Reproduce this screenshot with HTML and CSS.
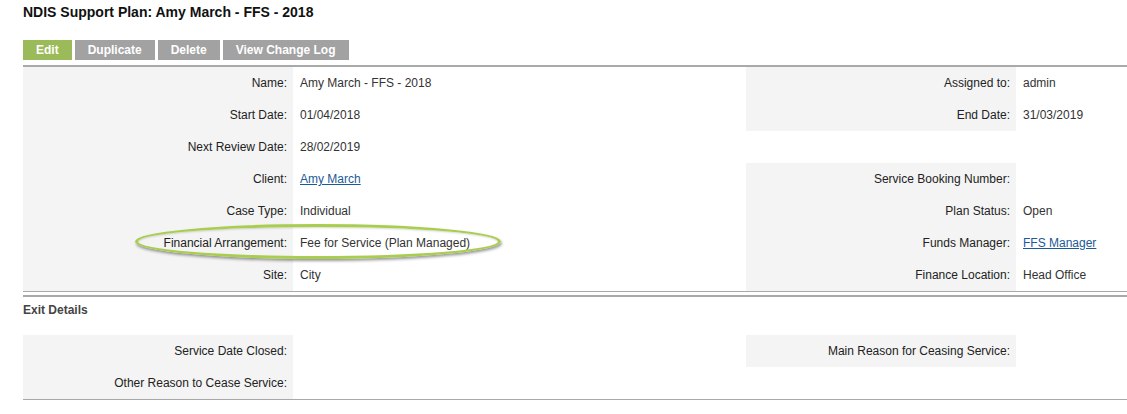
FILE: index.html
```html
<!DOCTYPE html>
<html lang="en">
<head>
    <meta charset="UTF-8">
    <title>NDIS Support Plan: Amy March - FFS - 2018</title>
    <link rel="stylesheet" href="styles.css">
</head>
<body>
    <div class="page">
        <h1>NDIS Support Plan: Amy March - FFS - 2018</h1>

        <div class="actions">
            <a href="#" class="btn btn-edit">Edit</a>
            <a href="#" class="btn">Duplicate</a>
            <a href="#" class="btn">Delete</a>
            <a href="#" class="btn">View Change Log</a>
        </div>

        <!-- Details du plan -->
        <div class="panel main-panel">
            <div class="details">
                <div class="lbl">Name:</div>
                <div class="val">Amy March - FFS - 2018</div>
                <div class="lbl">Assigned to:</div>
                <div class="val">admin</div>

                <div class="lbl">Start Date:</div>
                <div class="val">01/04/2018</div>
                <div class="lbl">End Date:</div>
                <div class="val">31/03/2019</div>

                <div class="lbl">Next Review Date:</div>
                <div class="val">28/02/2019</div>
                <div class="lbl blank"></div>
                <div class="val"></div>

                <div class="lbl">Client:</div>
                <div class="val"><a href="#">Amy March</a></div>
                <div class="lbl">Service Booking Number:</div>
                <div class="val"></div>

                <div class="lbl">Case Type:</div>
                <div class="val">Individual</div>
                <div class="lbl">Plan Status:</div>
                <div class="val">Open</div>

                <div class="lbl">Financial Arrangement:</div>
                <div class="val">Fee for Service (Plan Managed)</div>
                <div class="lbl">Funds Manager:</div>
                <div class="val"><a href="#">FFS Manager</a></div>

                <div class="lbl">Site:</div>
                <div class="val">City</div>
                <div class="lbl">Finance Location:</div>
                <div class="val">Head Office</div>
            </div>
            <div class="highlight"></div>
        </div>

        <div class="section-rule"></div>

        <h2>Exit Details</h2>

        <div class="panel">
            <div class="details">
                <div class="lbl">Service Date Closed:</div>
                <div class="val"></div>
                <div class="lbl">Main Reason for Ceasing Service:</div>
                <div class="val"></div>

                <div class="lbl">Other Reason to Cease Service:</div>
                <div class="val"></div>
                <div class="lbl blank"></div>
                <div class="val"></div>
            </div>
        </div>
    </div>
</body>
</html>
```

FILE: styles.css
```css
/* Reset basique */
* { margin: 0; padding: 0; box-sizing: border-box; }

body {
    font-family: "Liberation Sans", Arial, sans-serif;
    font-size: 12px;
    color: #222;
    background: #fff;
}

.page {
    padding-left: 23px;
}

h1 {
    font-size: 14px;
    font-weight: bold;
    line-height: 20px;
    margin-top: 2px;
    margin-bottom: 18px;
    color: #111;
}

/* Boutons */
.actions {
    display: flex;
    gap: 3px;
    margin-bottom: 5px;
}

.btn {
    display: block;
    height: 20px;
    line-height: 20px;
    padding: 0 13px;
    background: #a2a2a2;
    color: #fff;
    font-weight: bold;
    font-size: 12px;
    text-decoration: none;
}

.btn-edit {
    background: #9bba59;
}

/* Tableau de details */
.panel {
    position: relative;
    border-bottom: 1px solid #a9a9a9;
}

.main-panel {
    border-top: 2px solid #a9a9a9;
}

.details {
    display: grid;
    grid-template-columns: 270px 453px 270px 1fr;
    grid-auto-rows: 32px;
}

.lbl {
    background: #f4f4f4;
    text-align: right;
    padding-right: 6px;
    line-height: 32px;
    color: #222;
    white-space: nowrap;
}

.lbl.blank {
    background: transparent;
}

.val {
    padding-left: 7px;
    line-height: 32px;
    color: #333;
    white-space: nowrap;
}

.val a {
    color: #1b5a98;
    text-decoration: underline;
}

/* Surlignage */
.highlight {
    position: absolute;
    left: 112px;
    top: 157px;
    width: 366px;
    height: 35px;
    border: 3px solid #a9cd4e;
    border-radius: 50%;
    box-shadow: 1px 2px 3px rgba(0, 0, 0, 0.4), inset 0 1px 2px rgba(0, 0, 0, 0.15);
    pointer-events: none;
}

.section-rule {
    margin-top: 3px;
    border-top: 2px solid #a9a9a9;
}

h2 {
    font-size: 12px;
    font-weight: bold;
    line-height: 16px;
    margin-top: 5px;
    margin-bottom: 17px;
    color: #444;
}
```
